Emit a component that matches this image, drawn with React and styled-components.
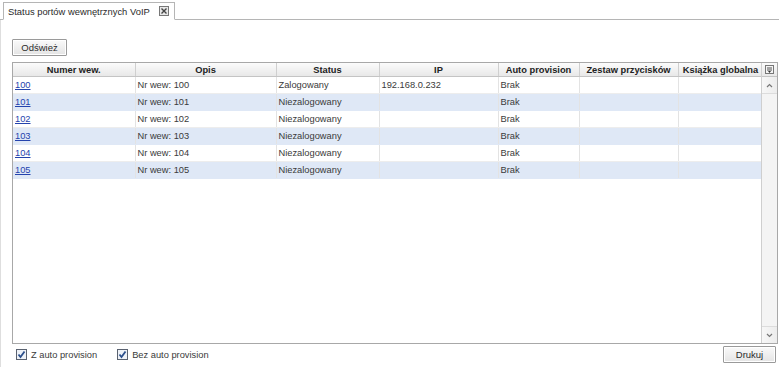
import React from "react";
import styled, { createGlobalStyle } from "styled-components";

const Global = createGlobalStyle`
  html, body { margin: 0; padding: 0; background: #fff; }
  body { font-family: "Liberation Sans", Arial, sans-serif; font-size: 9.3px; color: #222; }
`;

const Page = styled.div`
  width: 779px;
  height: 367px;
  display: flex;
  flex-direction: column;
  overflow: hidden;
`;

const TabStrip = styled.div`
  height: 20px;
  padding: 2px 0 0 3px;
  box-sizing: border-box;
  display: flex;
  align-items: flex-end;
  border-bottom: 1px solid #b5b5b5;
  background: #fff;
`;

const Tab = styled.div`
  height: 18px;
  margin-bottom: -1px;
  box-sizing: border-box;
  border: 1px solid #b5b5b5;
  border-bottom: 1px solid #fff;
  background: #fff;
  display: flex;
  align-items: center;
  gap: 9px;
  padding: 0 5px 0 4px;
  font-size: 9.4px;
  color: #2a2a2a;
`;

const CloseIcon = styled.svg`
  width: 10px;
  height: 10px;
  display: block;
`;

const Panel = styled.div`
  flex: 1;
  display: flex;
  flex-direction: column;
  padding: 19px 1px 0 11px;
  border-left: 1px solid #dedede;
  min-height: 0;
`;

const Button = styled.button`
  font-family: inherit;
  font-size: 9.5px;
  color: #2a2a2a;
  height: 17px;
  width: ${p => p.$w}px;
  padding: 0;
  border: 1px solid #9a9a9a;
  border-radius: 1px;
  background: linear-gradient(#fafafa, #e4e4e4);
  box-shadow: inset 0 0 0 1px #fff;
  cursor: pointer;
`;

const Grid = styled.div`
  margin-top: 6px;
  height: 282px;
  box-sizing: border-box;
  border: 1px solid #a8a8a8;
  display: flex;
`;

const TableArea = styled.div`
  flex: 1;
  display: flex;
  flex-direction: column;
  min-width: 0;
`;

const Table = styled.table`
  border-collapse: collapse;
  table-layout: fixed;
  width: 100%;
`;

const HeadCell = styled.th`
  height: 13px;
  padding: 0 2px;
  font-weight: bold;
  font-size: 9.3px;
  color: #222;
  text-align: center;
  white-space: nowrap;
  overflow: hidden;
  background: linear-gradient(#fbfbfb, #e8e8e8);
  border-right: 1px solid #cfcfcf;
  border-bottom: 1px solid #c4c4c4;
`;

const Row = styled.tr`
  background: ${p => (p.$alt ? "#dfe8f6" : "#fff")};
`;

const Cell = styled.td`
  height: 16px;
  padding: 0 2px;
  font-size: 9.3px;
  color: #3a3a3a;
  white-space: nowrap;
  overflow: hidden;
  border-right: 1px solid #e3e3e3;
  border-bottom: 1px solid ${p => (p.$alt ? "#dfe8f6" : "#ededed")};
`;

const Link = styled.a`
  color: #2443ad;
  text-decoration: underline;
  cursor: pointer;
`;

const ScrollCol = styled.div`
  width: 15px;
  display: flex;
  flex-direction: column;
  border-left: 1px solid #cfcfcf;
`;

const ScrollHead = styled.div`
  height: 14px;
  box-sizing: border-box;
  border-bottom: 1px solid #c4c4c4;
  background: linear-gradient(#fbfbfb, #e8e8e8);
  display: flex;
  align-items: center;
  justify-content: center;
`;

const Track = styled.div`
  flex: 1;
  display: flex;
  flex-direction: column;
  justify-content: space-between;
  background: #f4f4f4;
`;

const Arrow = styled.div`
  height: 16px;
  display: flex;
  align-items: center;
  justify-content: center;
  background: linear-gradient(90deg, #f7f7f7, #ececec);
  border-top: ${p => (p.$down ? "1px solid #dcdcdc" : "none")};
  border-bottom: ${p => (p.$down ? "none" : "1px solid #dcdcdc")};
`;

const Footer = styled.div`
  height: 21px;
  display: flex;
  align-items: center;
  padding: 0 0 0 4px;
`;

const Check = styled.label`
  display: flex;
  align-items: center;
  gap: 4px;
  font-size: 9.3px;
  color: #3a3a3a;
  margin-right: 20px;
`;

const Spacer = styled.div`
  flex: 1;
`;

const FooterButton = styled(Button)`
  margin-right: 2px;
`;

const cols = [
  { t: "Numer wew.", w: 122 },
  { t: "Opis", w: 141 },
  { t: "Status", w: 103 },
  { t: "IP", w: 119 },
  { t: "Auto provision", w: 81 },
  { t: "Zestaw przycisków", w: 99 },
  { t: "Książka globalna", w: 85 },
];

const rows = [
  { n: "100", s: "Zalogowany", ip: "192.168.0.232" },
  { n: "101", s: "Niezalogowany", ip: "" },
  { n: "102", s: "Niezalogowany", ip: "" },
  { n: "103", s: "Niezalogowany", ip: "" },
  { n: "104", s: "Niezalogowany", ip: "" },
  { n: "105", s: "Niezalogowany", ip: "" },
];

const CheckIcon = () => (
  <svg width="11" height="11" viewBox="0 0 11 11">
    <rect x="0.5" y="0.5" width="10" height="10" fill="#eef2f8" stroke="#5a6270" />
    <path d="M2.5 5.5 L4.5 8 L8.5 2.5" fill="none" stroke="#2b4f8c" strokeWidth="1.8" />
  </svg>
);

export default function App() {
  return (
    <Page>
      <Global />
      <TabStrip>
        <Tab>
          Status portów wewnętrznych VoIP
          <CloseIcon viewBox="0 0 10 10">
            <rect x="0.5" y="0.5" width="9" height="9" fill="#e8e8e8" stroke="#777" />
            <path d="M2.5 2.5 L7.5 7.5 M7.5 2.5 L2.5 7.5" stroke="#444" strokeWidth="1.4" />
          </CloseIcon>
        </Tab>
      </TabStrip>
      <Panel>
        <div>
          <Button $w={55}>Odśwież</Button>
        </div>
        <Grid>
          <TableArea>
            <Table>
              <colgroup>
                {cols.map(c => (
                  <col key={c.t} style={{ width: c.w }} />
                ))}
              </colgroup>
              <thead>
                <tr>
                  {cols.map(c => (
                    <HeadCell key={c.t}>{c.t}</HeadCell>
                  ))}
                </tr>
              </thead>
              <tbody>
                {rows.map((r, i) => (
                  <Row key={r.n} $alt={i % 2 === 1}>
                    <Cell $alt={i % 2 === 1}>
                      <Link>{r.n}</Link>
                    </Cell>
                    <Cell $alt={i % 2 === 1}>Nr wew: {r.n}</Cell>
                    <Cell $alt={i % 2 === 1}>{r.s}</Cell>
                    <Cell $alt={i % 2 === 1}>{r.ip}</Cell>
                    <Cell $alt={i % 2 === 1}>Brak</Cell>
                    <Cell $alt={i % 2 === 1}></Cell>
                    <Cell $alt={i % 2 === 1}></Cell>
                  </Row>
                ))}
              </tbody>
            </Table>
          </TableArea>
          <ScrollCol>
            <ScrollHead>
              <svg width="9" height="9" viewBox="0 0 9 9">
                <rect x="0.5" y="0.5" width="8" height="8" fill="#f4f4f4" stroke="#777" />
                <path d="M2 3 H7 M2 5 H7" stroke="#555" />
                <path d="M3 6 L4.5 8 L6 6 Z" fill="#333" />
              </svg>
            </ScrollHead>
            <Track>
              <Arrow>
                <svg width="7" height="5" viewBox="0 0 7 5">
                  <path d="M1 4 L3.5 1.5 L6 4" fill="none" stroke="#777" strokeWidth="1.2" />
                </svg>
              </Arrow>
              <Arrow $down>
                <svg width="7" height="5" viewBox="0 0 7 5">
                  <path d="M1 1 L3.5 3.5 L6 1" fill="none" stroke="#777" strokeWidth="1.2" />
                </svg>
              </Arrow>
            </Track>
          </ScrollCol>
        </Grid>
        <Footer>
          <Check>
            <CheckIcon />
            Z auto provision
          </Check>
          <Check>
            <CheckIcon />
            Bez auto provision
          </Check>
          <Spacer />
          <FooterButton $w={53}>Drukuj</FooterButton>
        </Footer>
      </Panel>
    </Page>
  );
}
